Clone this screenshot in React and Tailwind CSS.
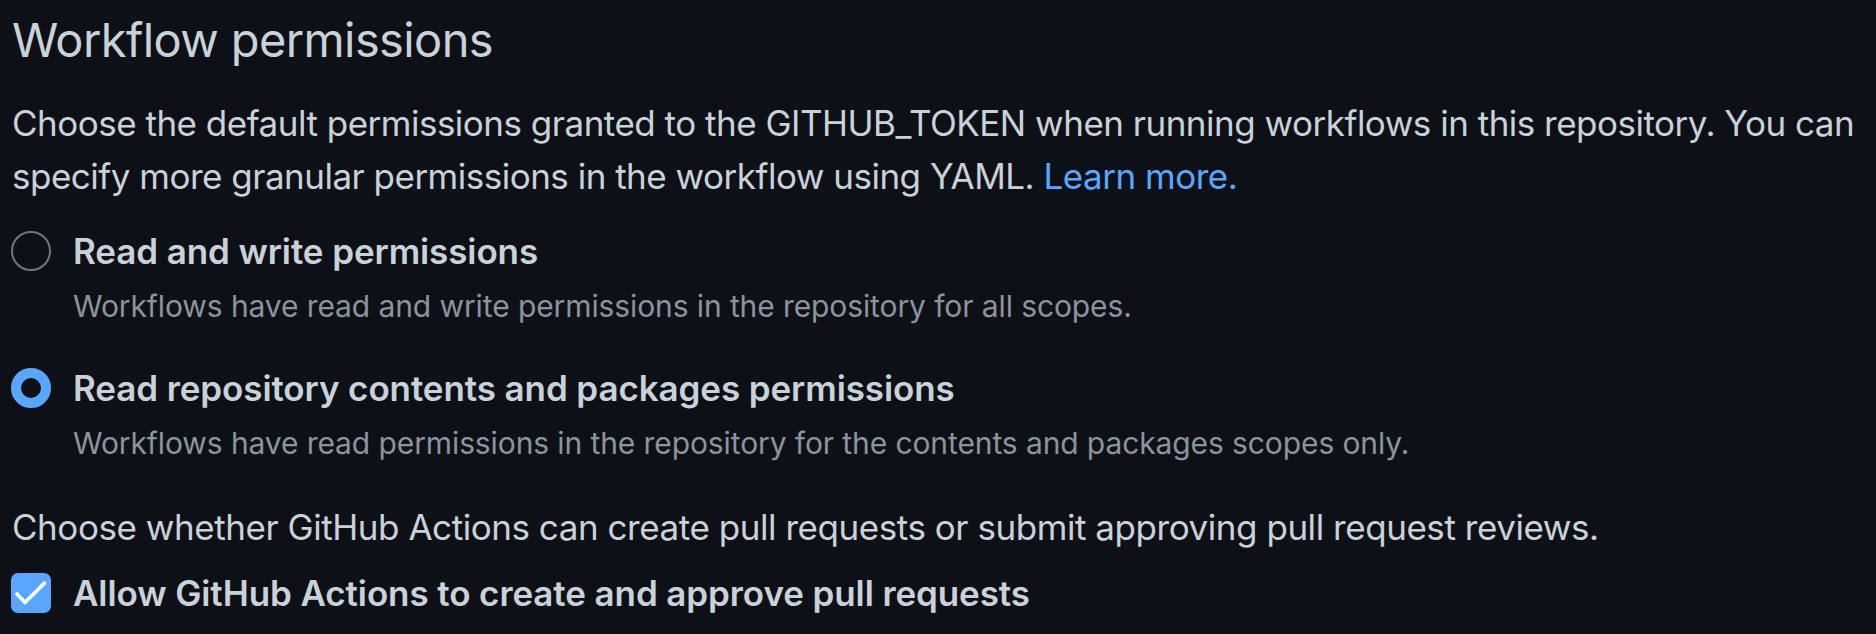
const textFont = { fontFamily: 'Inter, "Noto Sans", "Liberation Sans", sans-serif' };

const Radio = ({ checked }) =>
  checked ? (
    <span className="shrink-0 w-[40px] h-[40px] rounded-full border-[10px] border-[#58a6ff] bg-[#0d1117]" />
  ) : (
    <span className="shrink-0 w-[40px] h-[40px] rounded-full border-[2.5px] border-[#6e7681] bg-[#0d1117]" />
  );

const Checkbox = () => (
  <span className="shrink-0 w-[40px] h-[40px] rounded-[7px] bg-[#58a6ff] flex items-center justify-center">
    <svg width="40" height="40" viewBox="0 0 40 40" fill="none">
      <polyline
        points="6,21 14,29.5 33.5,10"
        stroke="#ffffff"
        strokeWidth="3.75"
        strokeLinecap="round"
        strokeLinejoin="round"
      />
    </svg>
  </span>
);

const Option = ({ checked, title, description, className }) => (
  <div className={`flex items-start gap-[22px] ${className}`}>
    <div className="h-[52px] flex items-center pl-[11px]">
      <Radio checked={checked} />
    </div>
    <div>
      <div className="text-[35px] leading-[52px] font-semibold tracking-[-0.1px] text-[#c9d1d9]">{title}</div>
      <div className="text-[30px] leading-[45px] tracking-[-0.1px] text-[#8b949e] mt-[7px]">{description}</div>
    </div>
  </div>
);

export default function App() {
  return (
    <div className="min-h-screen bg-[#0d1117] text-[#c9d1d9] pr-[12px]" style={textFont}>
      <h2 className="pl-[12px] pt-[2px] text-[47px] leading-[75px] font-normal tracking-[-0.6px]">
        Workflow permissions
      </h2>
      <p className="pl-[12px] mt-[20px] text-[35px] leading-[52.5px] tracking-[-0.5px]">
        Choose the default permissions granted to the GITHUB_TOKEN when running workflows in this repository. You can
        <br />
        specify more granular permissions in the workflow using YAML.{' '}
        <a href="#" className="text-[#58a6ff]">Learn more.</a>
      </p>

      <Option
        className="mt-[23px]"
        title="Read and write permissions"
        description="Workflows have read and write permissions in the repository for all scopes."
      />
      <Option
        checked
        className="mt-[33px]"
        title="Read repository contents and packages permissions"
        description="Workflows have read permissions in the repository for the contents and packages scopes only."
      />

      <p className="pl-[12px] mt-[35px] text-[35px] leading-[52.5px] tracking-[-0.45px]">
        Choose whether GitHub Actions can create pull requests or submit approving pull request reviews.
      </p>
      <div className="flex items-start gap-[22px] mt-[13px]">
        <div className="h-[52px] flex items-center pl-[11px]">
          <Checkbox />
        </div>
        <div className="text-[35px] leading-[52px] font-semibold tracking-[-0.1px] text-[#c9d1d9]">
          Allow GitHub Actions to create and approve pull requests
        </div>
      </div>
    </div>
  );
}
